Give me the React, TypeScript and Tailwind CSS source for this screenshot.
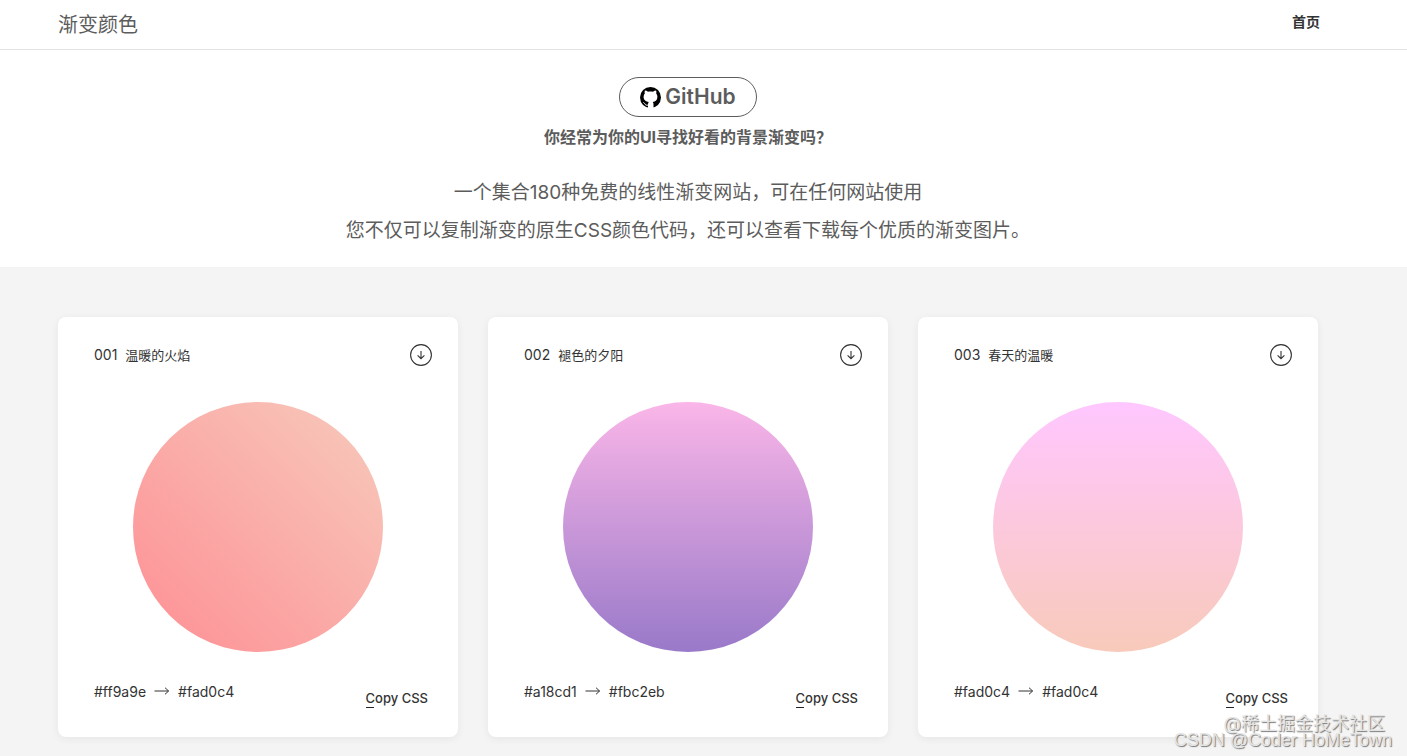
import React from 'react';

const gradients = [
  {
    id: '001',
    name: '温暖的火焰',
    from: '#ff9a9e',
    to: '#fad0c4',
    circle: 'bg-[linear-gradient(45deg,#fe8e94_0%,#f7cabc_99%)]',
  },
  {
    id: '002',
    name: '褪色的夕阳',
    from: '#a18cd1',
    to: '#fbc2eb',
    circle: 'bg-[linear-gradient(to_top,#9979c9_0%,#fab6e8_100%)]',
  },
  {
    id: '003',
    name: '春天的温暖',
    from: '#fad0c4',
    to: '#fad0c4',
    circle: 'bg-[linear-gradient(to_top,#f8cabb_0%,#f8cabb_1%,#ffc7ff_100%)]',
  },
];

function GithubIcon() {
  return (
    <svg className="w-[21px] h-[21px]" viewBox="0 0 21 21" aria-hidden="true">
      <circle cx="10.5" cy="10.5" r="10.5" fill="#000" />
      <path
        d="M4.9 3.5c1.1 0 2.2.5 3.1 1.2 1.600-.4 3.400-.4 5 0 .9-.7 2-1.200 3.100-1.200.4 1 .4 2 .1 2.900.8 1 1.200 2.100 1.200 3.400 0 3.400-1.900 4.900-4.700 5.300.6.6.8 1.300.8 2.200V21h-5.500v-3.700c0-.9.3-1.600.8-2.200-2.900-.4-5.200-1.900-5.200-5.300 0-1.300.4-2.400 1.200-3.400-.3-.9-.3-1.900.1-2.900z"
        fill="#fff"
      />
      <path d="M8.200 18.100c-2.300.5-3-.6-3.500-1.500-.3-.5-.7-.9-1.300-1.200" fill="none" stroke="#fff" strokeWidth="1" />
    </svg>
  );
}

function DownloadIcon() {
  return (
    <svg className="w-[22px] h-[22px]" viewBox="0 0 22 22" fill="none" stroke="currentColor" aria-hidden="true">
      <circle cx="11" cy="11" r="10.4" strokeWidth="1.1" />
      <path d="M11 7v8M7.6 11.300L11 14.700l3.400-3.400" strokeWidth="1.1" />
    </svg>
  );
}

function ArrowIcon() {
  return (
    <svg className="w-4 h-2 mb-0.5" viewBox="0 0 16 8" fill="none" stroke="currentColor" aria-hidden="true">
      <path d="M0.500 4h14M11 0.700L14.600 4L11 7.300" strokeWidth="1" />
    </svg>
  );
}

function GradientCard({ item }) {
  return (
    <article className="bg-white rounded-lg shadow-[0_2px_8px_rgba(0,0,0,0.06)] pt-[27px] pb-[29px] text-[#333]">
      <div className="flex items-center justify-between pl-9 pr-[26px]">
        <h2 className="flex gap-2 leading-5">
          <span className="text-sm">{item.id}</span>
          <span className="text-[13px] leading-5">{item.name}</span>
        </h2>
        <button type="button" aria-label={'下载 ' + item.name} className="cursor-pointer">
          <DownloadIcon />
        </button>
      </div>

      <div className={'w-[250px] h-[250px] rounded-full mx-auto mt-9 ' + item.circle}></div>

      <div className="flex items-start justify-between pl-9 pr-[30px] mt-[30px]">
        <div className="flex items-center gap-2 text-sm leading-5">
          <span>{item.from}</span>
          <ArrowIcon />
          <span>{item.to}</span>
        </div>
        <button
          type="button"
          className="relative mt-1.5 text-[13px] leading-5 font-medium cursor-pointer after:absolute after:left-0 after:bottom-0 after:w-2 after:h-px after:bg-[#222]"
        >
          Copy CSS
        </button>
      </div>
    </article>
  );
}

export default function App() {
  return (
    <div className="relative min-h-screen bg-[#f4f4f4] text-[#5c5c5c] font-[Inter,'Noto_Sans_CJK_SC',sans-serif]">
      <header className="flex items-center justify-between bg-white border-b border-[#e4e4e4] pl-[58px] pr-[87px] h-[50px]">
        <h1 className="text-xl">渐变颜色</h1>
        <nav>
          <a href="#" className="block text-sm font-bold text-[#333] pb-1.5">首页</a>
        </nav>
      </header>

      <section className="bg-white pl-[58px] pr-[89px] pt-[27px] pb-[17px] text-center">
        <a
          href="#"
          className="inline-flex items-center justify-center gap-1 h-10 px-5 border border-[#5c5c5c] rounded-full align-top text-[21px] font-semibold"
        >
          <GithubIcon />
          GitHub
        </a>
        <h3 className="text-base leading-10 font-bold">你经常为你的UI寻找好看的背景渐变吗？</h3>
        <p className="mt-[17px] text-[19px] leading-[38px]">
          一个集合180种免费的线性渐变网站，可在任何网站使用
          <br />
          您不仅可以复制渐变的原生CSS颜色代码，还可以查看下载每个优质的渐变图片。
        </p>
      </section>

      <main className="grid grid-cols-3 gap-[30px] pl-[58px] pr-[89px] pt-[50px] pb-[19px]">
        {gradients.map((item) => (
          <GradientCard key={item.id} item={item} />
        ))}
      </main>

      {/* watermarks over the last card */}
      <div className="absolute right-[22px] bottom-5 text-lg leading-6 text-[#e4e4e4] pointer-events-none [text-shadow:1px_1px_1px_#777]">
        @稀土掘金技术社区
      </div>
      <div className="absolute right-[15px] bottom-1 text-lg leading-6 text-[#e4e4e4] pointer-events-none font-['Liberation_Sans',sans-serif] [text-shadow:1px_1px_1px_#777]">
        CSDN @Coder HoMeTown
      </div>
    </div>
  );
}
